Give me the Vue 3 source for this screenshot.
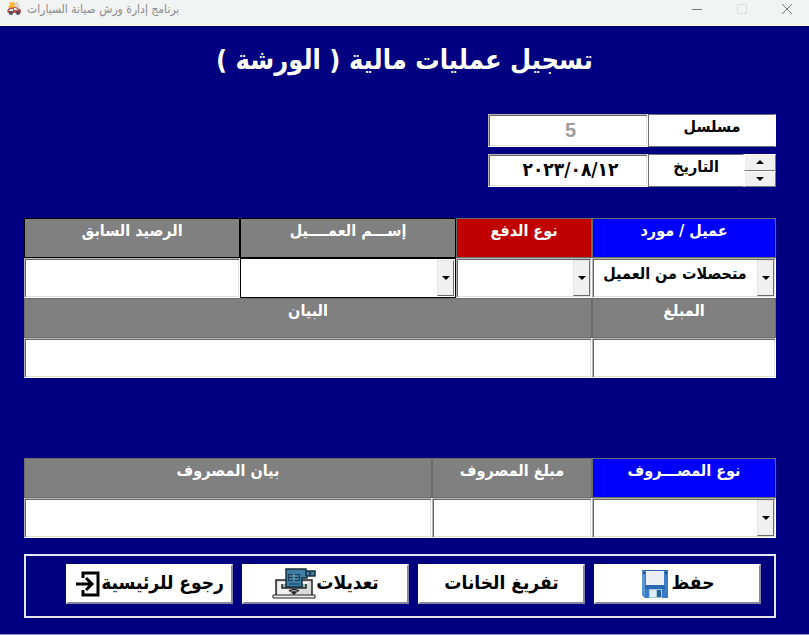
<script setup>
import { ref } from "vue";

const serial = ref("5");
const date = ref("٢٠٢٣/٠٨/١٢");

const digits = "٠١٢٣٤٥٦٧٨٩";
const toLatin = (text) => text.replace(/[٠-٩]/g, (d) => digits.indexOf(d));
const toArabic = (text) => text.replace(/\d/g, (d) => digits[d]);

function shiftDate(days) {
  const [y, m, d] = toLatin(date.value).split("/").map(Number);
  const next = new Date(Date.UTC(y, m - 1, d + days));
  date.value = toArabic(next.toISOString().slice(0, 10).replace(/-/g, "/"));
}

// span is the share of the row, out of 94
const operationFields = [
  { id: "party", label: "عميل / مورد", span: 23, tone: "blue", options: ["متحصلات من العميل"] },
  { id: "payment", label: "نوع الدفع", span: 17, tone: "red", options: [""] },
  { id: "client", label: "إســـم العمــــيل", span: 27, tone: "gray", options: [""], outlined: true },
  { id: "balance", label: "الرصيد السابق", span: 27, tone: "gray", outlinedLabel: true },
  { id: "amount", label: "المبلغ", span: 23, tone: "gray" },
  { id: "statement", label: "البيان", span: 71, tone: "gray" },
];

const expenseFields = [
  { id: "expense-type", label: "نوع المصـــروف", span: 23, tone: "blue", options: [""] },
  { id: "expense-amount", label: "مبلغ المصروف", span: 20, tone: "gray" },
  { id: "expense-statement", label: "بيان المصروف", span: 51, tone: "gray" },
];

const sections = [operationFields, expenseFields];
</script>

<template>
  <div class="window">
    <header class="titlebar">
      <svg class="app-icon" viewBox="0 0 16 16" aria-hidden="true">
        <path d="M3 2l3 1 1-2 2 2 3-1 0 3-3 3-5 1-2-2 2-2z" fill="#f3b431" />
        <path d="M8 4l4-2 2 5-4 2z" fill="#d9d6cf" />
        <path d="M1 11l2-3 7-1 5 3v3H2z" fill="#b5524a" />
        <path d="M4 9h3v2H3zM8 8h2l2 2H8z" fill="#dfe5e8" />
        <circle cx="5" cy="13" r="2" fill="#4a4a55" />
        <circle cx="12" cy="13" r="2" fill="#4a4a55" />
      </svg>
      <span class="app-name" dir="rtl">برنامج إدارة ورش صيانة السيارات</span>
      <div class="window-controls">
        <button type="button" aria-label="تصغير">
          <svg viewBox="0 0 12 12"><path d="M1 6.500h10" stroke="#777" /></svg>
        </button>
        <button type="button" aria-label="تكبير" disabled>
          <svg viewBox="0 0 12 12"><path d="M1.500 1.500h9v9h-9z" stroke="#dcdedc" /></svg>
        </button>
        <button type="button" aria-label="إغلاق">
          <svg viewBox="0 0 12 12"><path d="M1 1l10 10M11 1L1 11" stroke="#777" /></svg>
        </button>
      </div>
    </header>

    <h1 dir="rtl">تسجيل عمليات مالية ( الورشة )</h1>

    <form class="form" dir="rtl" @submit.prevent>
      <div class="meta">
        <div class="meta-row">
          <label for="serial">مسلسل</label>
          <input id="serial" v-model="serial" class="sunken serial" disabled />
        </div>
        <div class="meta-row">
          <div class="spinner">
            <button type="button" aria-label="اليوم التالي" @click="shiftDate(1)">
              <span class="arrow up" />
            </button>
            <button type="button" aria-label="اليوم السابق" @click="shiftDate(-1)">
              <span class="arrow" />
            </button>
          </div>
          <label for="date">التاريخ</label>
          <input id="date" v-model="date" class="sunken date" dir="ltr" />
        </div>
      </div>

      <section v-for="(fields, i) in sections" :key="i" class="fields">
        <div
          v-for="field in fields"
          :key="field.id"
          class="field"
          :style="{ gridColumn: `span ${field.span}` }"
        >
          <label
            :for="field.id"
            :class="[field.tone, { outlined: field.outlined || field.outlinedLabel }]"
          >{{ field.label }}</label>
          <div
            v-if="field.options"
            class="combo sunken"
            :class="{ outlined: field.outlined }"
          >
            <select :id="field.id">
              <option v-for="option in field.options" :key="option">{{ option }}</option>
            </select>
            <span class="drop" aria-hidden="true"><span class="arrow" /></span>
          </div>
          <input v-else :id="field.id" class="sunken" />
        </div>
      </section>

      <div class="actions">
        <button type="button">
          <span>حفظ</span>
          <svg class="icon-save" viewBox="0 0 28 30" aria-hidden="true">
            <path d="M1 1h26v28H4l-3-3z" fill="#3c7cc4" />
            <path d="M1 1h3v26l-3-2z" fill="#5b97d6" />
            <path d="M5 2h18v14H5z" fill="#eceef4" />
            <path d="M1 1h26v1H1z" fill="#2d66b3" />
            <path d="M2 3h2v2H2zM24 3h2v2h-2z" fill="#1e4b8c" />
            <path d="M4 16h20v4H4z" fill="#2d66b3" />
            <path d="M8 20h13v9H8z" fill="#a9cbdc" />
            <path d="M9 21h6v7H9z" fill="#dcebf0" />
            <path d="M16 21h4v7h-4z" fill="#24659e" />
          </svg>
        </button>
        <button type="button"><span>تفريغ الخانات</span></button>
        <button type="button">
          <span>تعديلات</span>
          <svg class="icon-edit" viewBox="0 0 44 32" aria-hidden="true">
            <path d="M4 12h36v16H4z" fill="#d9dad9" stroke="#222" stroke-width="1.500" />
            <path d="M6 14h32L14 27H6z" fill="#f2f2f2" />
            <path d="M1 27h42v3H1z" fill="#eee" stroke="#222" />
            <path d="M10 16v4h24v-4" fill="#9fb8b1" stroke="#222" stroke-width="1.500" />
            <path d="M14 1h20v2h9v5h-8v2h-5v9H14z" fill="#3f7fa6" stroke="#16303f" stroke-width="1.500" />
            <path d="M34 3v5M38 3v5" stroke="#16303f" stroke-width="1.500" />
            <path d="M16 6h12v7H16z" fill="#173f5b" />
            <path d="M17 8h10M17 11h10M22 6v7" stroke="#80b6d2" />
            <path d="M17 16h11" stroke="#173f5b" />
            <path d="M17 23q5-3 10 0M20 24l2 2 2-2z" fill="none" stroke="#222" stroke-width="1.500" />
          </svg>
        </button>
        <button type="button">
          <span>رجوع للرئيسية</span>
          <svg class="icon-exit" viewBox="0 0 26 26" aria-hidden="true">
            <path d="M8 7V2h15v22H8v-5" />
            <path d="M1 13h15M11 7l6 6-6 6" />
          </svg>
        </button>
      </div>
    </form>
  </div>
</template>

<style>
body {
  margin: 0;
  background: #000080;
}
</style>

<style scoped>
.window {
  display: flex;
  flex-direction: column;
  min-height: 100vh;
  box-sizing: border-box;
  border-bottom: 1px solid #8f93bd;
  background: #000080;
  font-family: "DejaVu Sans Condensed", "DejaVu Sans", sans-serif;
}

.window *,
.window *::before {
  box-sizing: border-box;
}

button,
input,
select {
  margin: 0;
  border-radius: 0;
  font: inherit;
  color: inherit;
}

.titlebar {
  display: flex;
  align-items: flex-start;
  height: 26px;
  padding-left: 6px;
  background: #f2f4f3;
  border-bottom: 1px solid #fff;
  color: #8b8c8c;
}

.app-icon {
  width: 16px;
  height: 16px;
}

.app-name {
  margin-left: 5px;
  font-size: 12px;
  line-height: 18px;
}

.window-controls {
  display: flex;
  margin-left: auto;
}

.window-controls button {
  display: flex;
  align-items: center;
  justify-content: center;
  width: 45px;
  height: 17px;
  padding: 0;
  border: 0;
  background: none;
}

.window-controls svg {
  width: 12px;
  height: 12px;
  fill: none;
}

h1 {
  margin: 14px 0 0;
  color: #fff;
  font-size: 27px;
  line-height: 40px;
  text-align: center;
}

.form {
  display: flex;
  flex-direction: column;
  padding: 0 33px 0 24px;
  font-size: 16px;
  font-weight: bold;
}

.meta {
  display: flex;
  flex-direction: column;
  gap: 7px;
  width: 288px;
  margin-top: 34px;
}

.meta-row {
  display: flex;
  height: 33px;
  background: #fff;
}

.meta-row label {
  flex: 1;
  border: 1px solid #6d6d78;
  border-right-color: #fff;
  line-height: 24px;
  text-align: center;
}

.sunken {
  width: 100%;
  min-width: 0;
  height: 40px;
  padding: 1px;
  border: 1px solid;
  border-color: #b8b8b8 #fff #fff #b8b8b8;
  background: #fff;
  box-shadow: inset 1px 1px 0 #686868, inset -1px -1px 0 #e0e0e0;
  outline: 0;
  text-align: center;
}

.meta-row .sunken {
  width: 160px;
  height: 33px;
  padding-left: 6px;
}

.meta-row .serial {
  color: #9c9c9c;
  font-family: "Liberation Sans", sans-serif;
  font-size: 20px;
}

.meta-row .date {
  padding-bottom: 4px;
  font-size: 19px;
}

.spinner {
  display: flex;
  flex-direction: column;
  width: 32px;
}

.spinner button {
  display: flex;
  flex: 1;
  align-items: center;
  justify-content: center;
  padding: 0;
  border: 1px solid;
  border-color: #fff #77777f #77777f #fff;
  background: #f0f0f0;
}

.arrow {
  border: 4px solid transparent;
  border-top-color: #000;
  border-bottom: 0;
}

.arrow.up {
  border-top: 0;
  border-bottom: 4px solid #000;
}

.fields {
  display: grid;
  grid-template-columns: repeat(94, minmax(0, 1fr));
  margin-top: 31px;
}

.fields + .fields {
  margin-top: 80px;
}

.field {
  display: flex;
  flex-direction: column;
  color: #fff;
}

.field label {
  height: 40px;
  border: 1px solid #6b6b6b;
  line-height: 24px;
  text-align: center;
}

.field label.gray {
  background: #808080;
}

.field label.blue {
  background: #0000ff;
}

.field label.red {
  background: #c00000;
}

.field .sunken {
  color: #000;
}

.field .outlined {
  border: 1px solid #000;
  box-shadow: none;
}

.combo.sunken {
  position: relative;
  padding-right: 19px;
}

select {
  display: block;
  width: 100%;
  height: 100%;
  padding: 0 0 10px;
  border: 0;
  outline: 0;
  background: none;
  appearance: none;
  text-align: center;
  text-align-last: center;
}

.drop {
  position: absolute;
  top: 1px;
  right: 1px;
  bottom: 1px;
  display: flex;
  align-items: center;
  justify-content: center;
  width: 17px;
  border: 1px solid;
  border-color: #e4e4e4 #6b6b6b #6b6b6b #e4e4e4;
  background: #f0f0f0;
  pointer-events: none;
}

.actions {
  display: grid;
  grid-template-columns: repeat(4, minmax(0, 1fr));
  gap: 9px;
  height: 64px;
  margin-top: 16px;
  padding: 8px 13px 14px 40px;
  border: 2px solid #e6e6f2;
}

.actions button {
  display: flex;
  align-items: center;
  justify-content: center;
  height: 40px;
  padding: 0;
  border: 2px solid;
  border-color: #fff #8585a0 #8585a0 #fff;
  background: #fff;
  color: #000;
  font-size: 19px;
  line-height: 28px;
  white-space: nowrap;
}

.actions span {
  padding-bottom: 4px;
}

.actions svg {
  flex: none;
}

.icon-save {
  width: 28px;
  height: 30px;
  margin-right: 3px;
}

.icon-edit {
  width: 44px;
  height: 32px;
}

.icon-exit {
  width: 26px;
  height: 26px;
  fill: none;
  stroke: #000;
  stroke-width: 3;
}
</style>
